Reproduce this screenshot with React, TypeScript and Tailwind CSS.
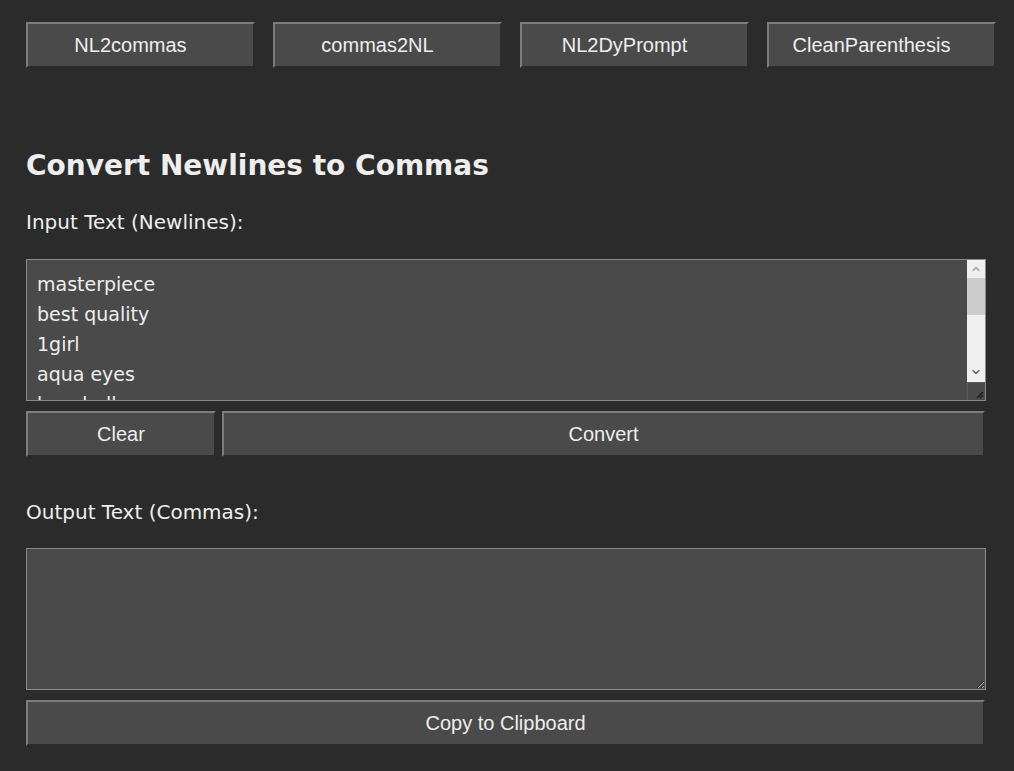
import { useState } from "react";
import { ChevronUp, ChevronDown } from "lucide-react";

const TABS = ["NL2commas", "commas2NL", "NL2DyPrompt", "CleanParenthesis"];

const btn =
  "h-[46px] shrink-0 bg-[#4a4a4a] text-[#eeeeee] text-[20px] font-['Liberation_Sans',Arial,sans-serif] border-2 border-t-[#7c7c7c] border-l-[#7c7c7c] border-b-[#2b2b2b] border-r-[#2b2b2b]";

const field =
  "block w-[960px] h-[142px] bg-[#4a4a4a] border border-[#8a8a8a] text-[#eeeeee] text-[19px] leading-[30px] px-[10px] py-[9px] outline-none";

function FakeScrollbar() {
  return (
    <div className="absolute right-[1px] top-[1px] bottom-[1px] w-[18px] flex flex-col pointer-events-none">
      <div className="flex-1 bg-[#f0f0f0] flex flex-col">
        <div className="h-[18px] flex items-center justify-center text-[#a3a3a3]">
          <ChevronUp size={12} strokeWidth={3} />
        </div>
        <div className="h-[37px] bg-[#cdcdcd]" />
        <div className="flex-1" />
        <div className="h-[20px] flex items-center justify-center text-[#606060]">
          <ChevronDown size={12} strokeWidth={3} />
        </div>
      </div>
      <div className="h-[18px] bg-[#4a4a4a] border-t border-l border-[#5c5c5c] relative">
        <svg width="17" height="17" viewBox="0 0 17 17" className="absolute right-0 bottom-0">
          <path d="M15 9 L9 15 M15 12 L12 15" stroke="#1c1c1c" strokeWidth="1.4" />
        </svg>
      </div>
    </div>
  );
}

export default function App() {
  const [input, setInput] = useState(
    "masterpiece\nbest quality\n1girl\naqua eyes\nbaseball cap\nblonde hair\nclosed mouth"
  );
  const [output, setOutput] = useState("");

  return (
    <div className="min-h-[771px] bg-[#2b2b2b] px-[26px] pt-[22px] font-['DejaVu_Sans','Noto_Sans',sans-serif] text-[#eeeeee]">
      <div className="flex gap-[18px]">
        {TABS.map((t) => (
          <button key={t} className={`${btn} w-[229px] pr-[20px]`}>
            {t}
          </button>
        ))}
      </div>

      <h2 className="mt-[78px] text-[28px] font-bold leading-[40px]">
        Convert Newlines to Commas
      </h2>

      <p className="mt-[22px] text-[20px] leading-[28px]">Input Text (Newlines):</p>
      <div className="relative mt-[23px] w-[960px]">
        <textarea
          className={`${field} [scrollbar-width:none]`}
          value={input}
          onChange={(e) => setInput(e.target.value)}
        />
        <FakeScrollbar />
      </div>
      <div className="flex gap-[6px] mt-[10px] w-[959px]">
        <button className={`${btn} w-[190px]`} onClick={() => setInput("")}>
          Clear
        </button>
        <button
          className={`${btn} flex-1`}
          onClick={() => setOutput(input.split("\n").filter(Boolean).join(", "))}
        >
          Convert
        </button>
      </div>

      <p className="mt-[41px] text-[20px] leading-[28px]">Output Text (Commas):</p>
      <textarea className={`${field} mt-[22px]`} value={output} readOnly />
      <button
        className={`${btn} w-[959px] mt-[10px]`}
        onClick={() => navigator.clipboard?.writeText(output)}
      >
        Copy to Clipboard
      </button>
    </div>
  );
}
